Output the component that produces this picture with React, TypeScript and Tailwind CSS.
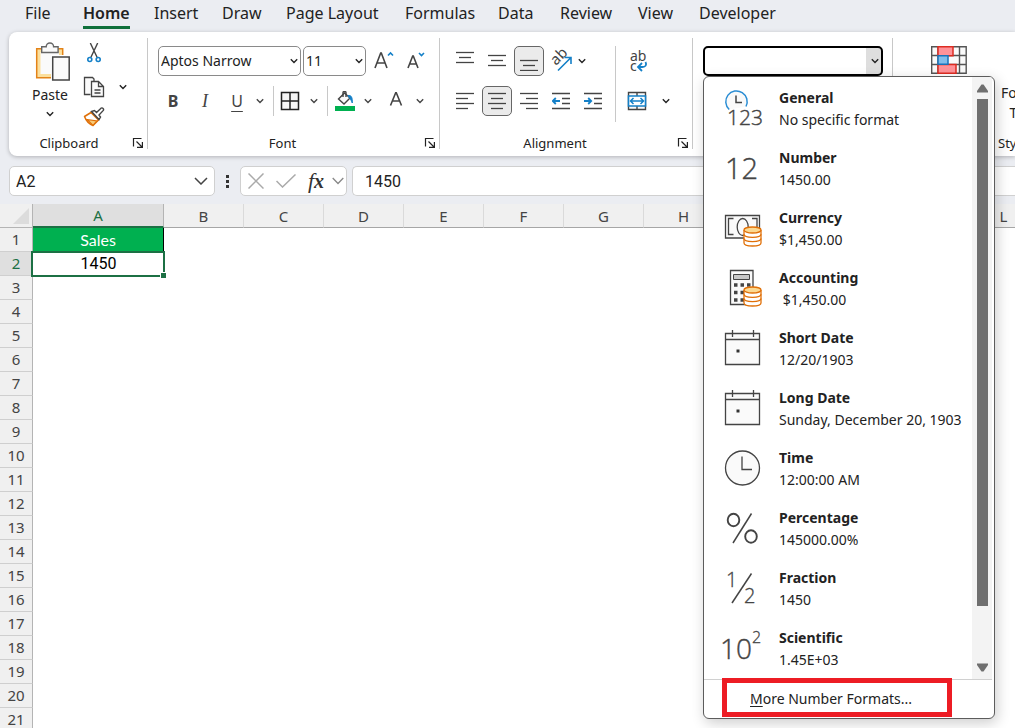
import React from "react";
import type { ReactNode } from "react";

const TABS = ["File", "Home", "Insert", "Draw", "Page Layout", "Formulas", "Data", "Review", "View", "Developer"];
const COLUMNS = ["A", "B", "C", "D", "E", "F", "G", "H", "I", "J", "K", "L"];
const ROWS = Array.from({ length: 21 }, (_, i) => i + 1);

function Chevron({ className = "" }: { className?: string }) {
  return (
    <svg className={className} width="8" height="6" viewBox="0 0 8 6" fill="none" stroke="currentColor" strokeWidth="1.4" aria-hidden="true">
      <path d="M.8 1.2 4 4.4l3.2-3.2" />
    </svg>
  );
}

function IconButton({ label, pressed, className = "h-[30px] w-[30px]", children }: { label: string; pressed?: boolean; className?: string; children: ReactNode }) {
  return (
    <button
      type="button"
      aria-label={label}
      aria-pressed={pressed}
      className={`flex shrink-0 items-center justify-center rounded-[5px] ${pressed ? "border border-[#666] bg-[#ebebeb]" : ""} ${className}`}
    >
      {children}
    </button>
  );
}

function DropButton({ label }: { label: string }) {
  return (
    <IconButton label={label} className="h-[30px] w-4">
      <Chevron />
    </IconButton>
  );
}

function Group({ label, className, children }: { label?: string; className: string; children: ReactNode }) {
  return (
    <section className={`flex h-[111px] shrink-0 flex-col border-r border-[#c8c8c8] ${className}`}>
      {children}
      {label && (
        <div className="mt-auto flex h-3 items-center">
          <span className="flex-1 text-center text-[13px] leading-3">{label}</span>
          <button type="button" aria-label={`${label} settings`} className="flex w-[22px] justify-end pr-[3px]">
            <svg width="12" height="12" viewBox="0 0 12 12" fill="none" stroke="#222" strokeWidth="1.2">
              <path d="M1.5 9.5v-8h8M4.5 4.5l5.5 5.5M10.4 5v5.4H5" />
            </svg>
          </button>
        </div>
      )}
    </section>
  );
}

function Lines({ rows, align, gap = 5, top = 1 }: { rows: number[]; align: "left" | "center" | "right"; gap?: number; top?: number }) {
  return (
    <svg width="18" height="20" viewBox="0 0 18 20" stroke="#444" strokeWidth="1.3" aria-hidden="true">
      {rows.map((w, i) => {
        const x = align === "left" ? 0 : align === "center" ? (18 - w) / 2 : 18 - w;
        const y = top + i * gap + 0.5;
        return <path key={i} d={`M${x} ${y}h${w}`} />;
      })}
    </svg>
  );
}

function IndentIcon({ increase }: { increase?: boolean }) {
  return (
    <svg width="18" height="18" viewBox="0 0 18 18" fill="none" strokeWidth="1.4" aria-hidden="true">
      <path stroke="#444" d="M0 1.5h18M10 6.5h8M10 11.5h8M0 16.5h18" />
      <path stroke="#1480c8" strokeWidth="1.8" d={increase ? "M0 9h7M4.2 6l3 3-3 3" : "M8 9H1M3.8 6l-3 3 3 3"} />
    </svg>
  );
}

function Coins() {
  return (
    <g fill="#fff" stroke="#e07008" strokeWidth="1.3">
      <path d="M20 21v13c0 1.7 3.6 3 8.500 3s8.500-1.300 8.500-3V21" />
      <path fill="none" d="M20 25.300c0 1.700 3.600 3 8.500 3s8.500-1.300 8.500-3M20 29.600c0 1.700 3.600 3 8.500 3s8.500-1.300 8.500-3" />
      <ellipse cx="28.500" cy="21" rx="8.500" ry="3" fill="#fbd992" />
    </g>
  );
}

function FormatIcon({ kind }: { kind: string }) {
  const glyph = "font-['Open_Sans',sans-serif] font-light";
  return (
    <svg width="38" height="38" viewBox="0 0 38 38" fill="none" stroke="#444" strokeWidth="1.3" className="shrink-0 overflow-visible" aria-hidden="true">
      {kind === "General" && (
        <>
          <path stroke="#2a8dd4" strokeWidth="1.5" fill="#fafafa" d="M5.200 20.500A10.700 10.700 0 1 1 22 17.500" />
          <path d="M12 6.500v7h6" strokeWidth="1.5" />
          <text x="3" y="36" fontSize="21" fill="#444" strokeWidth="0.4" className={glyph}>123</text>
        </>
      )}
      {kind === "Number" && <text x="1" y="30" fontSize="29" fill="#444" strokeWidth="0.4" className={glyph}>12</text>}
      {kind === "Currency" && (
        <>
          <path fill="#fafafa" d="M1.500 6.500h34v22.500h-34z" />
          <path d="M9.500 9.500h-5v16h5M28 9.500h5v9" />
          <ellipse cx="18.700" cy="18" rx="5.500" ry="8.500" />
          <Coins />
        </>
      )}
      {kind === "Accounting" && (
        <>
          <path fill="#fafafa" d="M6.500 1.500h22.500v34H6.500z" />
          <path fill="#c8c8c8" strokeWidth="1" d="M9.500 5.500h16v5h-16z" />
          <path strokeWidth="3.500" strokeDasharray="3.500 3" d="M10 16h17M10 23.500h17M10 31h17" />
          <Coins />
        </>
      )}
      {(kind === "Short Date" || kind === "Long Date") && (
        <>
          <path fill="#fafafa" d="M1.500 4.500h34v31h-34z" />
          <path d="M1.500 10.500h34M8.500 1v7M29.500 1v7" />
          <path fill="#333" stroke="none" d="M12.500 20.500h3v3h-3z" />
        </>
      )}
      {kind === "Time" && (
        <>
          <circle cx="18.500" cy="19" r="17" fill="#fafafa" />
          <path d="M18 7.500v13h10" />
        </>
      )}
      {kind === "Percentage" && (
        <>
          <path strokeWidth="1.500" d="M27.500 4.500 9 34" />
          <ellipse cx="9.500" cy="11" rx="5.800" ry="6.300" strokeWidth="1.900" />
          <ellipse cx="27" cy="27.500" rx="5.800" ry="6.300" strokeWidth="1.900" />
        </>
      )}
      {kind === "Fraction" && (
        <>
          <path strokeWidth="1.500" d="M27.500 4.500 8 34" />
          <text x="2" y="18" fontSize="20" fill="#444" strokeWidth="0.3" className={glyph}>1</text>
          <text x="20" y="34" fontSize="20" fill="#444" strokeWidth="0.3" className={glyph}>2</text>
        </>
      )}
      {kind === "Scientific" && (
        <>
          <text x="-4" y="30" fontSize="28" fill="#444" strokeWidth="0.4" className={glyph}>10</text>
          <text x="28" y="14" fontSize="16" fill="#444" strokeWidth="0.3" className={glyph}>2</text>
        </>
      )}
    </svg>
  );
}

const FORMATS: [string, string][] = [
  ["General", "No specific format"],
  ["Number", "1450.00"],
  ["Currency", "$1,450.00"],
  ["Accounting", "\u00a0$1,450.00"],
  ["Short Date", "12/20/1903"],
  ["Long Date", "Sunday, December 20, 1903"],
  ["Time", "12:00:00 AM"],
  ["Percentage", "145000.00%"],
  ["Fraction", "1450"],
  ["Scientific", "1.45E+03"],
];

function FormatMenu() {
  return (
    <div className="absolute top-full left-0 z-20 w-[292px] overflow-hidden rounded-md border border-[#5c5c5c] bg-white shadow-[2px_4px_14px_rgba(0,0,0,0.2)]">
      <div className="mr-0.5 flex border-b border-[#d0d0d0]">
        <ul className="flex-1 py-px">
          {FORMATS.map(([name, sample]) => (
            <li key={name}>
              <button type="button" className="flex h-[60px] w-full items-center gap-[17px] pl-5 text-left">
                <FormatIcon kind={name} />
                <span className="flex flex-col pt-0.5 text-sm leading-[22px] whitespace-nowrap">
                  <strong className="font-bold">{name}</strong>
                  <span>{sample}</span>
                </span>
              </button>
            </li>
          ))}
        </ul>
        <div className="flex w-5 flex-col items-center bg-[#f3f3f3] py-[7px]">
          <svg width="11" height="9" viewBox="0 0 11 9" aria-hidden="true"><path fill="#6f6f6f" d="M4.500.500h2L11 7v1.500H0V7z" /></svg>
          <div className="mt-1.5 h-[507px] w-[11px] bg-[#6f6f6f]" />
          <svg className="mt-auto" width="11" height="9" viewBox="0 0 11 9" aria-hidden="true"><path fill="#6f6f6f" d="M0 .500h11V2L6.500 8.500h-2L0 2z" /></svg>
        </div>
      </div>
      <div className="-mt-0.5 pb-px pl-[18px]">
        <button type="button" className="flex h-[39px] w-[230px] items-center border-[5px] border-[#ed1c24] pt-0.5 pl-[23px] text-sm">
          <span><span className="underline underline-offset-2">M</span>ore Number Formats...</span>
        </button>
      </div>
    </div>
  );
}

function Clipboard() {
  return (
    <Group label="Clipboard" className="w-[139px] pl-1">
      <div className="flex pt-[3px] pl-3">
        <button type="button" className="flex w-[50px] flex-col items-center text-sm leading-5">
          <svg className="ml-1.5" width="36" height="42" viewBox="0 0 36 42" fill="none" aria-hidden="true">
            <path fill="#fbdf9c" stroke="#e38318" strokeWidth="1.500" d="M1.700 7.700h26v29h-26z" />
            <path fill="#fafafa" d="M5.500 11h18.500v22H5.500z" />
            <path fill="#fafafa" stroke="#666" strokeWidth="1.400" d="M6.700 11.500V5.700h4.500a3.700 3.700 0 0 1 7.400 0h4.500v5.800z" />
            <path fill="#fafafa" stroke="#fff" strokeWidth="4" d="M18 16h16v23H18z" />
            <path fill="#fafafa" stroke="#444" strokeWidth="1.500" d="M17.700 16h16.500v23H17.700z" />
          </svg>
          <span className="mt-0.5">Paste</span>
          <Chevron className="mt-1.5" />
        </button>
        <div className="flex flex-col pl-1">
          <IconButton label="Cut" className="h-[23px] w-[30px]">
            <svg width="14" height="20" viewBox="0 0 14 20" fill="none" strokeWidth="1.400" aria-hidden="true">
              <path stroke="#444" d="m3.300 0 6.900 14.500M10.700 0 3.800 14.500" />
              <g stroke="#1480c8" strokeWidth="1.600"><circle cx="2.800" cy="16.500" r="2" /><circle cx="11.200" cy="16.500" r="2" /></g>
            </svg>
          </IconButton>
          <div className="mt-1 flex">
            <IconButton label="Copy" className="mt-1 h-[30px] w-[30px]">
              <svg width="22" height="22" viewBox="0 0 22 22" fill="#fafafa" stroke="#444" strokeWidth="1.300" aria-hidden="true">
                <path d="M7.500 18.500h-6v-17h8l1.500 1.500v3" />
                <path d="M8.500 5.500h7l5 5v10h-12zM15.500 5.500v5h5" />
                <path d="M11.500 14h6M11.500 17h6" />
              </svg>
            </IconButton>
            <div className="mt-1 ml-1.5"><DropButton label="Copy options" /></div>
          </div>
          <IconButton label="Format painter">
            <svg width="22" height="20" viewBox="0 0 22 20" fill="none" aria-hidden="true">
              <path fill="#fff" stroke="#e07008" strokeWidth="1.500" strokeLinejoin="round" d="m8 5.500 7.500 7.500L10 18.500C6 17 3 13.500 1.500 9.500z" />
              <path fill="#f8ca76" stroke="#e07008" strokeWidth="1.200" d="M4 12.500 14 14l-4 4.500z" />
              <path fill="#fff" stroke="#444" strokeWidth="1.400" d="m8.500 4.500 3-1 2 2L18 1.200c1.600-1 3.200.8 2.300 2.200L16 8l1.500 2-1.500 2.500z" />
            </svg>
          </IconButton>
        </div>
      </div>
    </Group>
  );
}

function FontGroup() {
  return (
    <Group label="Font" className="w-[292px]">
      <div className="flex flex-col gap-2.5 pt-2 pl-2.5">
        <div className="flex items-center">
          <div className="relative">
            <select aria-label="Font name" className="h-[30px] w-[143px] appearance-none rounded-[5px] border border-[#8a8a8a] bg-white pl-0.5 text-sm">
              <option>Aptos Narrow</option>
            </select>
            <Chevron className="pointer-events-none absolute top-3 right-[3px]" />
          </div>
          <div className="relative ml-0.5">
            <select aria-label="Font size" className="h-[30px] w-[63px] appearance-none rounded-[5px] border border-[#8a8a8a] bg-white pl-0.5 text-sm">
              <option>11</option>
            </select>
            <Chevron className="pointer-events-none absolute top-3 right-[3px]" />
          </div>
          <IconButton label="Increase font size" className="ml-0.5 h-[30px] w-8">
            <svg width="20" height="20" viewBox="0 0 20 20" fill="none" stroke="#444" strokeWidth="1.600" aria-hidden="true">
              <path d="M1 17 6.700 2h.600L13 17M3 12h8" />
              <path stroke="#1480c8" d="m14 4.500 2.500-2.500L19 4.500" />
            </svg>
          </IconButton>
          <IconButton label="Decrease font size" className="h-[30px] w-8">
            <svg width="18" height="20" viewBox="0 0 18 20" fill="none" stroke="#444" strokeWidth="1.600" aria-hidden="true">
              <path d="M1 17 5.700 5h.600L11 17M3 13h6" />
              <path stroke="#1480c8" d="m12 2 2.500 2.500L17 2" />
            </svg>
          </IconButton>
        </div>
        <div className="flex items-center text-base text-[#444]">
          <IconButton label="Bold"><b>B</b></IconButton>
          <IconButton label="Italic" className="h-[30px] w-[34px]"><i className="font-['Liberation_Serif',serif] text-lg">I</i></IconButton>
          <IconButton label="Underline"><span className="underline underline-offset-4">U</span></IconButton>
          <DropButton label="Underline options" />
          <span className="ml-[5px] h-[30px] w-px bg-[#c8c8c8]" />
          <IconButton label="Borders" className="h-[30px] w-8">
            <svg width="20" height="20" viewBox="0 0 20 20" fill="#f6f6f6" stroke="#222" strokeWidth="1.500" aria-hidden="true">
              <path d="M1.500 1.500h17v17h-17zM10 1.500v17M1.500 10h17" />
            </svg>
          </IconButton>
          <DropButton label="Border options" />
          <span className="ml-[5px] h-[30px] w-px bg-[#c8c8c8]" />
          <IconButton label="Fill color" className="h-[30px] w-8">
            <svg className="ml-0.5" width="20" height="20" viewBox="0 0 20 20" fill="none" stroke="#444" strokeWidth="1.400" aria-hidden="true">
              <path fill="#00b050" stroke="none" d="M0 15h20v5H0z" />
              <path fill="#fafafa" d="m9.500 2 5.500 5-6 6L3.500 8z" />
              <path d="M8 6V1.500c0-1.300 3-1.300 3 0V6" />
              <path fill="#1480c8" stroke="#1480c8" strokeWidth="1" d="M13 4.500c3.500-.5 4.500 2 4.300 7.500-1-2-1.300-3.500-2.800-5z" />
            </svg>
          </IconButton>
          <DropButton label="Fill options" />
          <IconButton label="Font color" className="ml-1 h-[30px] w-8">
            <svg width="14" height="18" viewBox="0 0 14 18" fill="none" stroke="#444" strokeWidth="1.600" aria-hidden="true">
              <path d="M1.500 13.500 6.700.800h.600l5.200 12.700M3.300 9h7.400" />
            </svg>
          </IconButton>
          <DropButton label="Font color options" />
        </div>
      </div>
    </Group>
  );
}

function AlignmentGroup() {
  return (
    <Group label="Alignment" className="w-[253px]">
      <div className="flex pt-2 pl-2.5">
        <div className="flex w-[166px] flex-col gap-2.5 border-r border-[#c8c8c8]">
          <div className="flex gap-0.5">
            <IconButton label="Top align"><Lines rows={[18, 12, 18]} align="center" top={1} /></IconButton>
            <IconButton label="Middle align"><Lines rows={[18, 12, 18]} align="center" top={4} /></IconButton>
            <IconButton label="Bottom align" pressed><Lines rows={[18, 12, 18]} align="center" top={9} /></IconButton>
            <IconButton label="Orientation">
              <svg className="overflow-visible" width="22" height="22" viewBox="0 0 22 22" fill="none" aria-hidden="true">
                <text x="0" y="0" transform="translate(6 16) rotate(-45)" fontSize="15" fill="#444">ab</text>
                <path stroke="#1480c8" strokeWidth="1.600" d="M8 20.500 20.500 8M14.500 7.500h6.500V14" />
              </svg>
            </IconButton>
            <div className="-ml-1"><DropButton label="Orientation options" /></div>
          </div>
          <div className="flex gap-0.5">
            <IconButton label="Align left"><Lines rows={[18, 12, 18, 12]} align="left" top={2} /></IconButton>
            <IconButton label="Center" pressed><Lines rows={[18, 12, 18, 12]} align="center" top={2} /></IconButton>
            <IconButton label="Align right"><Lines rows={[18, 12, 18, 12]} align="right" top={2} /></IconButton>
            <IconButton label="Decrease indent"><IndentIcon /></IconButton>
            <IconButton label="Increase indent"><IndentIcon increase /></IconButton>
          </div>
          <div className="-mt-1" />
        </div>
        <div className="flex flex-col gap-2.5 pl-1.5">
          <IconButton label="Wrap text">
            <svg className="overflow-visible" width="20" height="22" viewBox="0 0 20 22" fill="none" aria-hidden="true">
              <text x="3" y="11" fontSize="14" fill="#444">ab</text>
              <text x="3" y="21" fontSize="14" fill="#444">c</text>
              <path stroke="#1480c8" strokeWidth="1.800" d="M18.500 12c1.500 3 0 5-3 5H11M15 13l-4 4 4 4" />
            </svg>
          </IconButton>
          <div className="flex gap-1.5">
            <IconButton label="Merge and center">
              <svg width="20" height="20" viewBox="0 0 20 20" fill="none" strokeWidth="1.400" aria-hidden="true">
                <path fill="#fafafa" stroke="#444" d="M1.500 1.500h17v17h-17zM10 1.500v17" />
                <path fill="#fff" stroke="#1480c8" strokeWidth="1.600" d="M1.500 5h17v10h-17z" />
                <path stroke="#1480c8" strokeWidth="1.500" d="M4 10h12M6.500 7 3.500 10l3 3M13.500 7l3 3-3 3" />
              </svg>
            </IconButton>
            <DropButton label="Merge options" />
          </div>
        </div>
      </div>
    </Group>
  );
}

function NumberGroup() {
  return (
    <Group className="w-[200px]">
      <div className="relative mt-2 ml-2.5 w-[180px]">
        <select aria-label="Number format" className="h-[30px] w-full appearance-none rounded-[5px] border-2 border-black bg-white bg-linear-to-l from-[#dedede] from-[15px] to-transparent to-[15px]">
          <option></option>
        </select>
        <Chevron className="pointer-events-none absolute top-3 right-1" />
        <FormatMenu />
      </div>
    </Group>
  );
}

function StylesGroup() {
  return (
    <section className="flex h-[111px] shrink-0 flex-col pt-[7px]">
      <div className="flex">
        <IconButton label="Conditional formatting" className="h-[30px] w-[108px] pl-1">
          <svg width="36" height="28" viewBox="0 0 36 28" fill="#fafafa" stroke="#555" strokeWidth="1.400" aria-hidden="true">
            <path d="M.700.700h34.500v26.500H.700zM.700 9.500h34.500M.700 18.500h34.500M7 .700v26.500M28.500.700v26.500" />
            <g strokeWidth="1.500">
              <path fill="#ff9298" stroke="#dd2c22" d="M7 .700h15v9H7zM7 18.500h18v8.700H7z" />
              <path fill="#82bdea" stroke="#1873ba" d="M7 9.700h10v8.600H7z" />
            </g>
          </svg>
        </IconButton>
        <button type="button" className="flex flex-col items-center pt-[38px] text-sm leading-5 whitespace-nowrap">
          <span>Format as</span>
          <span className="flex items-center gap-1.5">Table <Chevron /></span>
        </button>
      </div>
      <span className="mt-auto pl-[105px] text-[13px] leading-3">Styles</span>
    </section>
  );
}

export default function App() {
  return (
    <div className="flex h-screen flex-col overflow-hidden bg-[#ebedf2] font-['Noto_Sans',sans-serif] text-[#222]">
      <nav className="grid h-8 shrink-0 grid-cols-[58px_71px_68px_64px_119px_93px_62px_78px_61px_auto] pl-[25px] text-base leading-[26px]">
        {TABS.map((tab) => (
          <div key={tab}>
            <a href="#" className={`inline-block h-[29px] whitespace-nowrap ${tab === "Home" ? "border-b-[3px] border-[#0f703b] font-semibold" : ""}`}>
              {tab}
            </a>
          </div>
        ))}
      </nav>

      <div className="relative z-10 ml-[9px] flex h-[124px] shrink-0 rounded-l-lg bg-white pt-1.5 shadow-[0_1px_4px_rgba(0,0,0,0.25)]">
        <Clipboard />
        <FontGroup />
        <AlignmentGroup />
        <NumberGroup />
        <StylesGroup />
      </div>

      <div className="mt-2.5 mb-2 flex h-[30px] shrink-0 pl-[9px] font-[Roboto,sans-serif] text-base">
        <div className="flex w-[206px] items-center rounded-[5px] border border-[#d0d0d0] bg-white pr-1.5 pl-1.5">
          <input aria-label="Name box" defaultValue="A2" className="min-w-0 flex-1 bg-transparent pt-0.5 outline-none" />
          <svg width="14" height="8" viewBox="0 0 14 8" fill="none" stroke="#444" strokeWidth="1.500" aria-hidden="true"><path d="m1 1 6 6 6-6" /></svg>
        </div>
        <svg className="w-[25px]" height="30" viewBox="0 0 25 30" fill="#333" aria-hidden="true">
          <path d="M11 9h3v3h-3zM11 14h3v3h-3zM11 19h3v3h-3z" />
        </svg>
        <div className="mr-[5px] flex w-[107px] items-center rounded-[5px] border border-[#d0d0d0] bg-white">
          <button type="button" aria-label="Cancel" className="flex w-[30px] justify-center">
            <svg width="16" height="16" viewBox="0 0 16 16" stroke="#aaa" strokeWidth="1.500"><path d="m.500.500 15 15M15.500.500l-15 15" /></svg>
          </button>
          <button type="button" aria-label="Enter" className="flex w-[30px] justify-center">
            <svg width="20" height="14" viewBox="0 0 20 14" fill="none" stroke="#aaa" strokeWidth="1.500"><path d="m.500 7 6 6L19.500.500" /></svg>
          </button>
          <button type="button" aria-label="Insert function" className="w-[30px] font-['Liberation_Serif',serif] text-[22px] leading-6 font-bold text-[#333] italic"><span className="font-normal">f</span><span className="text-xl leading-6">x</span></button>
          <button type="button" aria-label="Function options" className="flex w-3.5 justify-center">
            <svg width="12" height="8" viewBox="0 0 12 8" fill="none" stroke="#888" strokeWidth="1.300"><path d="m.700 1 5.300 5.500L11.300 1" /></svg>
          </button>
        </div>
        <input aria-label="Formula" defaultValue="1450" className="min-w-0 flex-1 rounded-l-[5px] border border-r-0 border-[#d0d0d0] bg-white pt-0.5 pl-3 outline-none" />
      </div>

      <div className="min-h-0 flex-1 overflow-hidden bg-white">
        <table className="w-[1044px] table-fixed border-separate border-spacing-0 text-[15px] leading-[20px]">
          <colgroup>
            <col className="w-[33px]" />
            <col className="w-[131px]" />
            {COLUMNS.slice(1).map((c) => <col key={c} className="w-20" />)}
          </colgroup>
          <thead>
            <tr className="h-6 bg-[#f0f0f0] text-[#444]">
              <td className="border-r border-b border-[#b4b4b4] p-0">
                <svg className="ml-auto mr-[3px]" width="16" height="16" viewBox="0 0 16 16" aria-hidden="true"><path fill="#dcdcdc" d="M16 0v16H0z" /></svg>
              </td>
              {COLUMNS.map((c) => (
                <th
                  key={c}
                  scope="col"
                  className={`p-0 font-normal ${c === "A" ? "border-r border-b-2 border-r-[#b4b4b4] border-b-[#1c7044] bg-[#dfdfdf] text-[#1c7044]" : "border-r border-b border-r-[#dadada] border-b-[#a6a6a6]"}`}
                >
                  {c}
                </th>
              ))}
            </tr>
          </thead>
          <tbody>
            {ROWS.map((r) => (
              <tr key={r} className="h-6">
                <th scope="row" className={`border-r border-b border-r-[#b4b4b4] border-b-[#cfcfcf] p-0 pb-px font-normal ${r === 2 ? "bg-[#dfdfdf] text-[#1c7044]" : "bg-[#f0f0f0] text-[#444]"}`}>
                  {r}
                </th>
                {r === 1 && <td className="border-r border-black bg-[#00b050] p-0 text-center font-[Lato,sans-serif] text-base leading-[22px] text-white">Sales</td>}
                {r === 2 && (
                  <td className="relative p-0 text-center font-[Roboto,sans-serif] text-base leading-[22px] text-black">
                    1450
                    <span className="absolute -top-px -right-px -bottom-px -left-0.5 border-2 border-[#1c7044]" />
                    <span className="absolute -right-0.5 -bottom-0.5 h-[6px] w-[6px] border-t border-l border-white bg-[#1c7044]" />
                  </td>
                )}
                {r > 2 && <td />}
              </tr>
            ))}
          </tbody>
        </table>
      </div>
    </div>
  );
}
